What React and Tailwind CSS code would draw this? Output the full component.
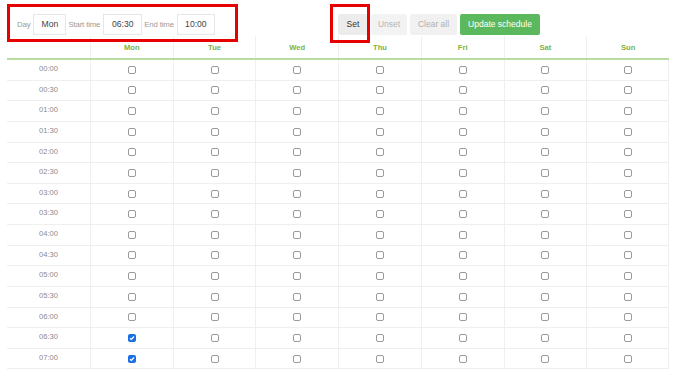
import React from 'react';

const days = ['Mon', 'Tue', 'Wed', 'Thu', 'Fri', 'Sat', 'Sun'];
const times = [
  '00:00', '00:30', '01:00', '01:30', '02:00', '02:30', '03:00', '03:30',
  '04:00', '04:30', '05:00', '05:30', '06:00', '06:30', '07:00',
];

const Box = ({ checked }) =>
  checked ? (
    <span className="flex h-[8px] w-[8px] items-center justify-center rounded-[2px] bg-[#1a6fe6]">
      <svg width="6" height="6" viewBox="0 0 6 6">
        <path d="M1 3.2 L2.4 4.5 L5 1.5" fill="none" stroke="#fff" strokeWidth="1.2" />
      </svg>
    </span>
  ) : (
    <span className="block h-[8px] w-[8px] rounded-[2px] border border-[#9a9a9a] bg-white" />
  );

const Field = ({ label, value, w }) => (
  <div className="flex items-center gap-[3px]">
    <span className="text-[7.8px] tracking-[-0.15px] text-[#9a9a9a]">{label}</span>
    <span className={`flex h-[21px] ${w} items-center justify-center border border-[#e6e6e6] text-[8.6px] text-[#444]`}>
      {value}
    </span>
  </div>
);

const App = () => {
  return (
    <div className="relative h-[371px] w-[674px] overflow-hidden bg-white" style={{ fontFamily: '"Liberation Sans", Arial, sans-serif' }}>
      <div className="flex h-[36px] items-center pl-[17px] pt-[14px] pb-[1px]">
        <div className="flex w-[321px] items-center gap-[2px]">
          <Field label="Day" value="Mon" w="w-[33px]" />
          <Field label="Start time" value="06:30" w="w-[39px]" />
          <Field label="End time" value="10:00" w="w-[38px]" />
        </div>
        <div className="flex items-center gap-[3px]">
          <button className="h-[21px] w-[30px] rounded-[2px] bg-[#ececec] text-[8.5px] text-[#333]">Set</button>
          <button className="h-[21px] w-[36px] rounded-[2px] bg-[#f3f3f3] text-[8.5px] text-[#b5b5b5]">Unset</button>
          <button className="h-[21px] w-[47px] rounded-[2px] bg-[#f1f1f1] text-[8.5px] text-[#b0b0b0]">Clear all</button>
          <button className="-mt-[1px] h-[21px] w-[80px] rounded-[2px] bg-[#5cb85c] text-[8.5px] text-white">Update schedule</button>
        </div>
      </div>

      <div className="ml-[7px] w-[662px]">
        <div className="grid h-[24px] grid-cols-[83px_repeat(7,1fr)] border-b-2 border-[#b9dc9f]">
          <div />
          {days.map((d) => (
            <div key={d} className="flex items-center justify-center border-l border-[#efefef] pt-[2px] text-[7.6px] font-bold text-[#7cb342]">
              {d}
            </div>
          ))}
        </div>
        {times.map((t) => (
          <div key={t} className="grid h-[20.64px] grid-cols-[83px_repeat(7,1fr)] border-b border-[#efefef]">
            <div className="flex items-center justify-center pb-[2px] text-[7.6px] text-[#8a8a8a]">{t}</div>
            {days.map((d, i) => (
              <div key={d} className={`flex items-center justify-center border-l border-[#efefef] ${i === 6 ? 'border-r' : ''}`}>
                <Box checked={d === 'Mon' && (t === '06:30' || t === '07:00')} />
              </div>
            ))}
          </div>
        ))}
      </div>

      <div className="absolute left-[7px] top-[4px] h-[38px] w-[231px] border-[3px] border-[#e60000]" />
      <div className="absolute left-[330px] top-[4px] h-[39px] w-[40px] border-[3px] border-[#e60000]" />
    </div>
  );
};

export default App;
